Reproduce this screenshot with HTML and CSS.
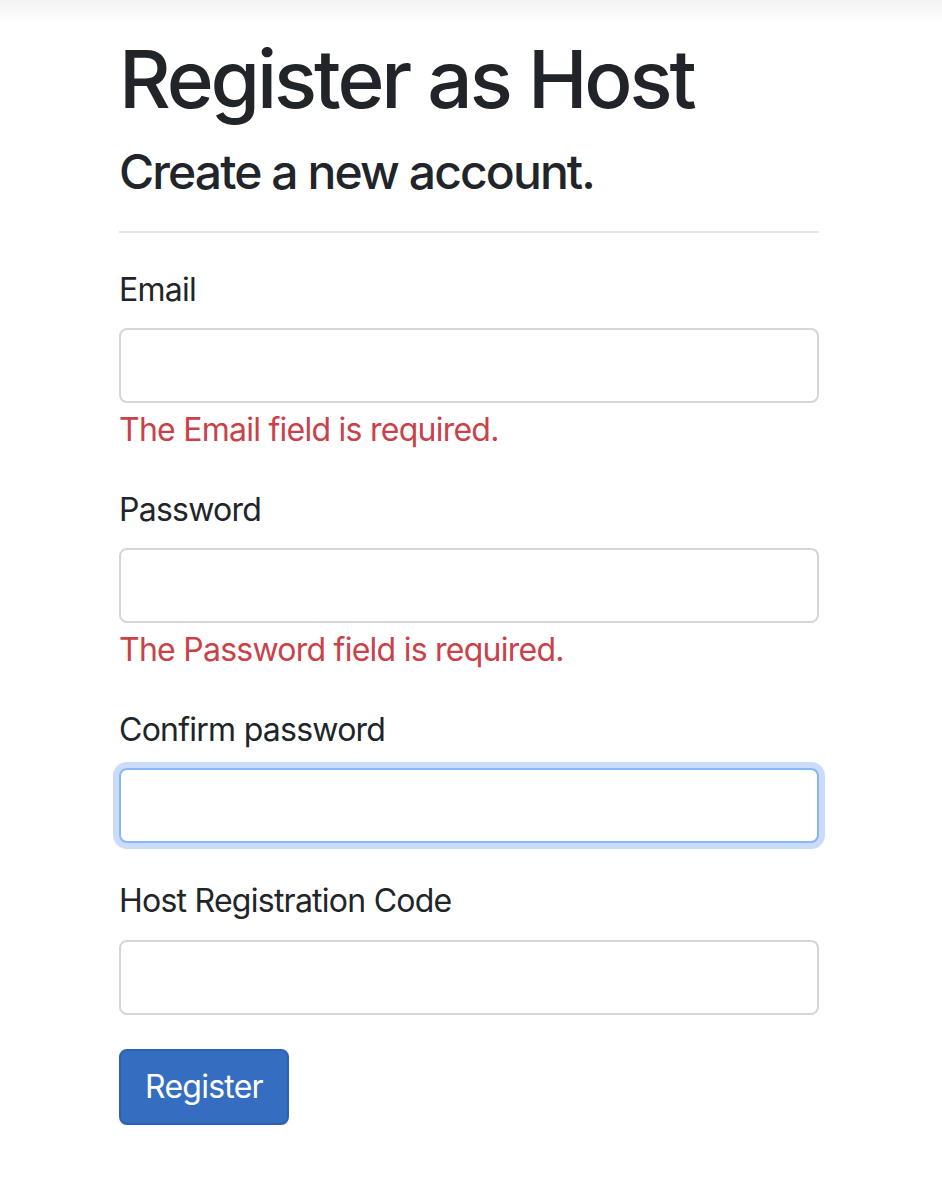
FILE: index.html
```html
<!DOCTYPE html>
<html lang="en">
<head>
<meta charset="utf-8">
<title>Register as Host</title>
<link rel="stylesheet" href="styles.css">
</head>
<body>
<div class="topshade"></div>
<main class="container">
  <h1 class="title">Register as Host</h1>
  <form class="form">
    <h4 class="subtitle">Create a new account.</h4>
    <hr class="divider">
    <div class="form-group">
      <label class="label" for="email">Email</label>
      <input class="control" id="email" type="email">
      <span class="error">The Email field is required.</span>
    </div>
    <div class="form-group">
      <label class="label" for="pw">Password</label>
      <input class="control" id="pw" type="password">
      <span class="error">The Password field is required.</span>
    </div>
    <div class="form-group focus-group">
      <label class="label" for="cpw">Confirm password</label>
      <input class="control focused" id="cpw" type="password">
    </div>
    <div class="form-group last">
      <label class="label" for="code">Host Registration Code</label>
      <input class="control" id="code" type="text">
    </div>
    <button class="btn" type="button">Register</button>
  </form>
</main>
</body>
</html>
```

FILE: styles.css
```css
html, body {
  margin: 0;
  padding: 0;
  background: #fff;
}
body {
  font-family: Inter, "Liberation Sans", sans-serif;
  color: #212529;
  font-size: 32px;
  line-height: 1.5;
  letter-spacing: -0.75px;
}
.topshade {
  height: 24px;
  background: linear-gradient(to bottom, #f3f3f3, #ffffff);
}
.container {
  width: 700px;
  margin: 0 0 0 119px;
  padding-top: 7px;
}
.title {
  margin: 0 0 16px;
  font-size: 80px;
  font-weight: 500;
  line-height: 1.2;
  letter-spacing: -3.1px;
}
.form {
  margin: 0;
}
.subtitle {
  margin: 0;
  font-size: 48px;
  font-weight: 500;
  line-height: 1.2;
  letter-spacing: -1.9px;
}
.divider {
  margin: 30px 0 33px;
  border: 0;
  border-top: 2px solid #e6e6e6;
  height: 0;
}
.form-group {
  margin-bottom: 32px;
}
.form-group.focus-group {
  margin-bottom: 34px;
}
.form-group.last {
  margin-bottom: 34px;
}
.form-group.last .label {
  margin-bottom: 15px;
}
.label {
  display: block;
  margin-bottom: 14px;
}
.control {
  display: block;
  box-sizing: border-box;
  width: 100%;
  height: 75px;
  padding: 12px 24px;
  border: 2px solid #d3d6db;
  border-radius: 8px;
  background: #fff;
  font: inherit;
  outline: none;
  margin: 0;
}
.control.focused {
  border-color: #86b7f7;
  box-shadow: 0 0 0 6px #cbdcfb;
}
.error {
  display: block;
  margin-top: 3px;
  color: #c9424a;
}
.btn {
  display: inline-block;
  box-sizing: border-box;
  height: 76px;
  padding: 12px 24px;
  border: 2px solid #2e62ae;
  border-radius: 8px;
  background: #356ec0;
  color: #fff;
  font: inherit;
  letter-spacing: inherit;
  line-height: 1.5;
  cursor: pointer;
}
```
